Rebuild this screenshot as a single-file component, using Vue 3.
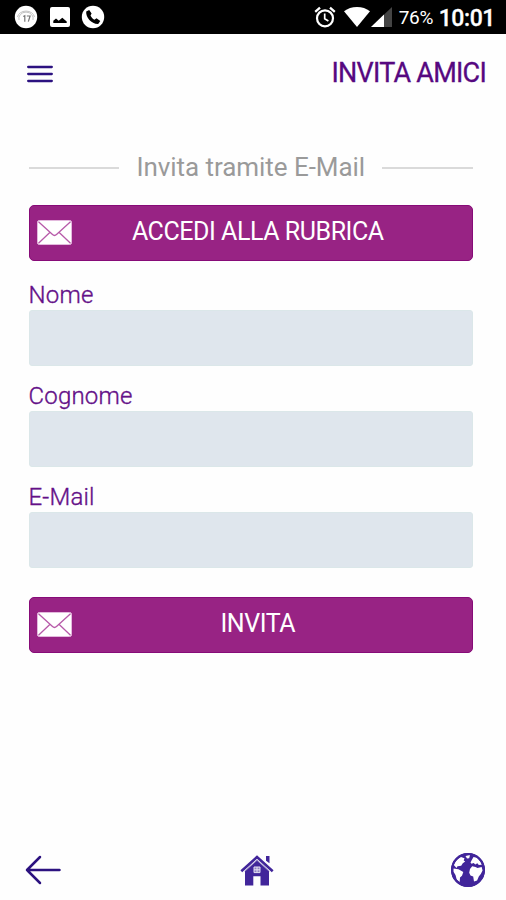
<script setup>
import { ref } from 'vue'

const fields = ref([
  { id: 'nome', label: 'Nome', value: '' },
  { id: 'cognome', label: 'Cognome', value: '' },
  { id: 'email', label: 'E-Mail', value: '' }
])
</script>

<template>
  <div class="screen">
    <div class="status">
      <svg class="s-app" viewBox="0 0 24 24">
        <circle cx="12" cy="12" r="11.2" fill="#fff" />
        <path d="M3.5 12a8.6 7 0 0 1 17 0M5 15a7.2 6.4 0 1 1 14 0" fill="none" stroke="#bbb" stroke-width=".9" />
        <path d="M9.3 11.5l1.5-.8v6M12.8 11h3.3l-1.8 5.6" fill="none" stroke="#777" stroke-width="1.2" />
      </svg>
      <svg class="s-pic" viewBox="0 0 20 20">
        <rect width="20" height="20" rx="2" fill="#fff" />
        <path d="M3.300 16v-2.300l2.700-2.200 2.700 2.300 3.600-3 4.400 3.600V16z" fill="#000" />
      </svg>
      <svg class="s-call" viewBox="0 0 24 24">
        <circle cx="12" cy="12" r="11.2" fill="#fff" />
        <path d="M8.2 4.900L5.200 6.600C4.700 12.800 10.600 19.300 17.200 19l2.100-3-3.800-2.700-2.100 1.400c-1.700-.8-3.100-2.300-3.900-4.200l1.100-1.900z" fill="#000" />
      </svg>
      <svg class="s-alarm" viewBox="0 0 22 22">
        <g fill="none" stroke="#fff">
          <circle cx="11" cy="12.300" r="8" stroke-width="2.200" />
          <path d="M1.200 5.800l4.800-4.200M20.800 5.800L16 1.600" stroke-width="2.300" />
          <path d="M10.700 7.600v5.100l3.700 2.200" stroke-width="1.700" />
        </g>
      </svg>
      <svg class="s-wifi" viewBox="0 0 26 20">
        <path d="M13 20L0 4.300Q5.500 0 13 0T26 4.300z" fill="#fff" />
      </svg>
      <svg class="s-cell" viewBox="0 0 21 20">
        <path d="M21 0v20H0z" fill="#444" />
        <path d="M13 7.600V20H0z" fill="#fff" />
      </svg>
      <span class="battery">76%</span>
      <span class="clock">10:01</span>
    </div>

    <header class="header">
      <button class="icon-btn" aria-label="Menu">
        <svg class="menu" viewBox="0 0 26 18">
          <path d="M1.200 2h23.600M1.200 9h23.600M1.200 16h23.600" stroke="#2c1280" stroke-width="2.300" stroke-linecap="round" />
        </svg>
      </button>
      <h1 class="title">INVITA AMICI</h1>
    </header>

    <main class="content">
      <div class="divider">
        <span class="line"></span>
        <span class="divider-text">Invita tramite E-Mail</span>
        <span class="line"></span>
      </div>

      <button class="action">
        <svg class="mail" viewBox="0 0 35 25">
          <rect x=".5" y=".5" width="34" height="24" rx="1.800" fill="#fff" stroke="#e3b9dd" />
          <path d="M1.500 1.800l14 12.800q2 1.800 4 0L33.500 1.800M1.500 23.300l11.300-10.800M33.500 23.300L22.200 12.500" fill="none" stroke="#b75aa9" stroke-width="1.300" />
        </svg>
        <span class="action-text">ACCEDI ALLA RUBRICA</span>
      </button>

      <form class="form" @submit.prevent>
        <div v-for="f in fields" :key="f.id" class="field">
          <label :for="f.id" class="label">{{ f.label }}</label>
          <input :id="f.id" v-model="f.value" class="input" />
        </div>
        <button class="action submit">
          <svg class="mail" viewBox="0 0 35 25">
            <rect x=".5" y=".5" width="34" height="24" rx="1.800" fill="#fff" stroke="#e3b9dd" />
            <path d="M1.500 1.800l14 12.800q2 1.800 4 0L33.500 1.800M1.500 23.300l11.300-10.800M33.500 23.300L22.200 12.500" fill="none" stroke="#b75aa9" stroke-width="1.300" />
          </svg>
          <span class="action-text">INVITA</span>
        </button>
      </form>
    </main>

    <nav class="footer">
      <button class="icon-btn" aria-label="Indietro">
        <svg class="back" viewBox="0 0 36 30">
          <path d="M15 2L2 15l13 13M2 15h32.500" fill="none" stroke="#2c1280" stroke-width="2.500" stroke-linecap="round" stroke-linejoin="round" />
        </svg>
      </button>
      <button class="icon-btn" aria-label="Home">
        <svg class="home" viewBox="0 0 34 32">
          <path d="M26 1h3.500v7.200L26 5.700z" fill="#41259a" />
          <path d="M17 4.800L5 15.700V30.500h8.300v-9.300h7.200v9.300H29V15.700z" fill="#41259a" />
          <path d="M1.300 16.300L17 2l15.700 14.300" fill="none" stroke="#41259a" stroke-width="2.600" />
          <path d="M4.500 16.500L17 5.300l12.500 11.200" fill="none" stroke="#b9aed8" stroke-width=".8" />
          <path d="M14 12h6v5.600h-6zM17 12v5.600M14 14.800h6" fill="#8f80c2" stroke="#e4dff1" stroke-width="1" />
        </svg>
      </button>
      <button class="icon-btn" aria-label="Lingua">
        <svg class="globe" viewBox="0 0 36 36">
          <circle cx="18" cy="18" r="17" fill="#41259a" />
          <path d="M3.800 13Q6 7.500 11 5l3.500 1.200-.8 2.300 1.500 1-2.400 1.800-1.600 2.500-3.700.4-1 1.800z" fill="#fff" />
          <path d="M3.500 16.500l5 .8 4.800 2.700-1.300 3.700-2 1.800-.3 4.500-3-2.500-1.200-4.500-2-3.200z" fill="#fff" />
          <path d="M15.500 4l4.500-.9-.8 3.100-2.200.4z" fill="#fff" />
          <path d="M21.500 8.500l2-3.500 3.500.7 3.300 3.800 1.500 3.200-3 .3-1.500-1.700-2 1.200-1.600-1.500-2.200.8-1-1.300z" fill="#fff" />
          <path d="M20 17l2.200-2.800 3.300.8 2 1 4.200-1 .9 3.500-1.800 3.500-2 2.500-1.700 4-3.100 1-.8-5-2.700-1-1.300-2.800z" fill="#fff" />
          <circle cx="18" cy="18" r="16" fill="none" stroke="#41259a" stroke-width="2" />
        </svg>
      </button>
    </nav>
  </div>
</template>

<style>
body {
  background: #fefefe;
}
</style>

<style scoped>
.screen {
  display: flex;
  flex-direction: column;
  box-sizing: border-box;
  height: 900px;
  font-family: Roboto, "Liberation Sans", sans-serif;
  background: #fefefe;
}
button {
  font-family: inherit;
  border: 0;
  margin: 0;
  padding: 0;
}
svg {
  display: block;
  flex: none;
}
.status {
  display: flex;
  align-items: center;
  height: 34px;
  padding: 0 11px 0 14px;
  box-sizing: border-box;
  background: #000;
  color: #fff;
}
.s-app { width: 24px; height: 24px; }
.s-pic { width: 20px; height: 20px; margin-left: 12px; }
.s-call { width: 24px; height: 24px; margin-left: 11px; }
.s-alarm { width: 22px; height: 22px; margin-left: auto; }
.s-wifi { width: 26px; height: 20px; margin-left: 8px; }
.s-cell { width: 21px; height: 20px; margin-left: 1px; }
.battery {
  margin-left: 7px;
  width: 35px;
  padding-top: 2px;
  font-size: 19px;
  line-height: 34px;
  letter-spacing: -0.2px;
  white-space: nowrap;
}
.clock {
  margin-left: 5px;
  padding-top: 3px;
  font-size: 23px;
  font-weight: 500;
  line-height: 34px;
  letter-spacing: -0.4px;
  -webkit-text-stroke: 0.3px #fff;
}
.header {
  display: flex;
  align-items: center;
  justify-content: space-between;
  height: 79px;
  padding: 0 20px 0 27px;
}
.icon-btn {
  background: none;
}
.menu { width: 26px; height: 18px; }
.title {
  margin: 0;
  padding-bottom: 2px;
  font-size: 27px;
  font-weight: 400;
  line-height: 32px;
  letter-spacing: -0.75px;
  color: #560880;
  -webkit-text-stroke: 0.3px #560880;
}
.content {
  flex: 1;
  padding: 35px 33px 0 28.500px;
}
.divider {
  display: flex;
  align-items: center;
  gap: 17px;
  height: 40px;
}
.line {
  flex: 1;
  height: 1.500px;
  background: #dadada;
}
.divider-text {
  font-size: 26px;
  line-height: 38px;
  padding-bottom: 2px;
  letter-spacing: -0.05px;
  color: #9a9a9a;
}
.action {
  display: flex;
  align-items: center;
  width: 444.500px;
  height: 56px;
  margin-top: 17px;
  padding: 0 28px 1px 7px;
  box-sizing: border-box;
  border: 1px solid #870b78;
  border-radius: 5px;
  background: #982384;
  color: #fff;
}
.mail { width: 35px; height: 25px; }
.action-text {
  flex: 1;
  font-size: 25px;
  line-height: 30px;
  padding-bottom: 1px;
  letter-spacing: -0.45px;
  text-align: center;
}
.field {
  display: flex;
  flex-direction: column;
  height: 101.200px;
}
.form {
  padding-top: 19px;
}
.label {
  align-self: flex-start;
  height: 30px;
  font-size: 24px;
  line-height: 30px;
  letter-spacing: 0.2px;
  color: #641088;
  font-weight: 300;
  -webkit-text-stroke: 0.35px #641088;
}
.input {
  width: 444.500px;
  height: 56px;
  box-sizing: border-box;
  border: 1px solid #dbe7e9;
  border-radius: 3px;
  background: #dfe6ed;
  padding: 0 12px;
  font: 24px Roboto, sans-serif;
  outline: 0;
}
.submit {
  margin-top: 13.400px;
}
.footer {
  display: flex;
  align-items: center;
  justify-content: space-between;
  height: 61px;
  padding: 0 20px 0 25px;
}
.back { width: 36px; height: 30px; }
.home { width: 34px; height: 32px; margin: 2px 0 0 2px; }
.globe { width: 36px; height: 36px; }
</style>
